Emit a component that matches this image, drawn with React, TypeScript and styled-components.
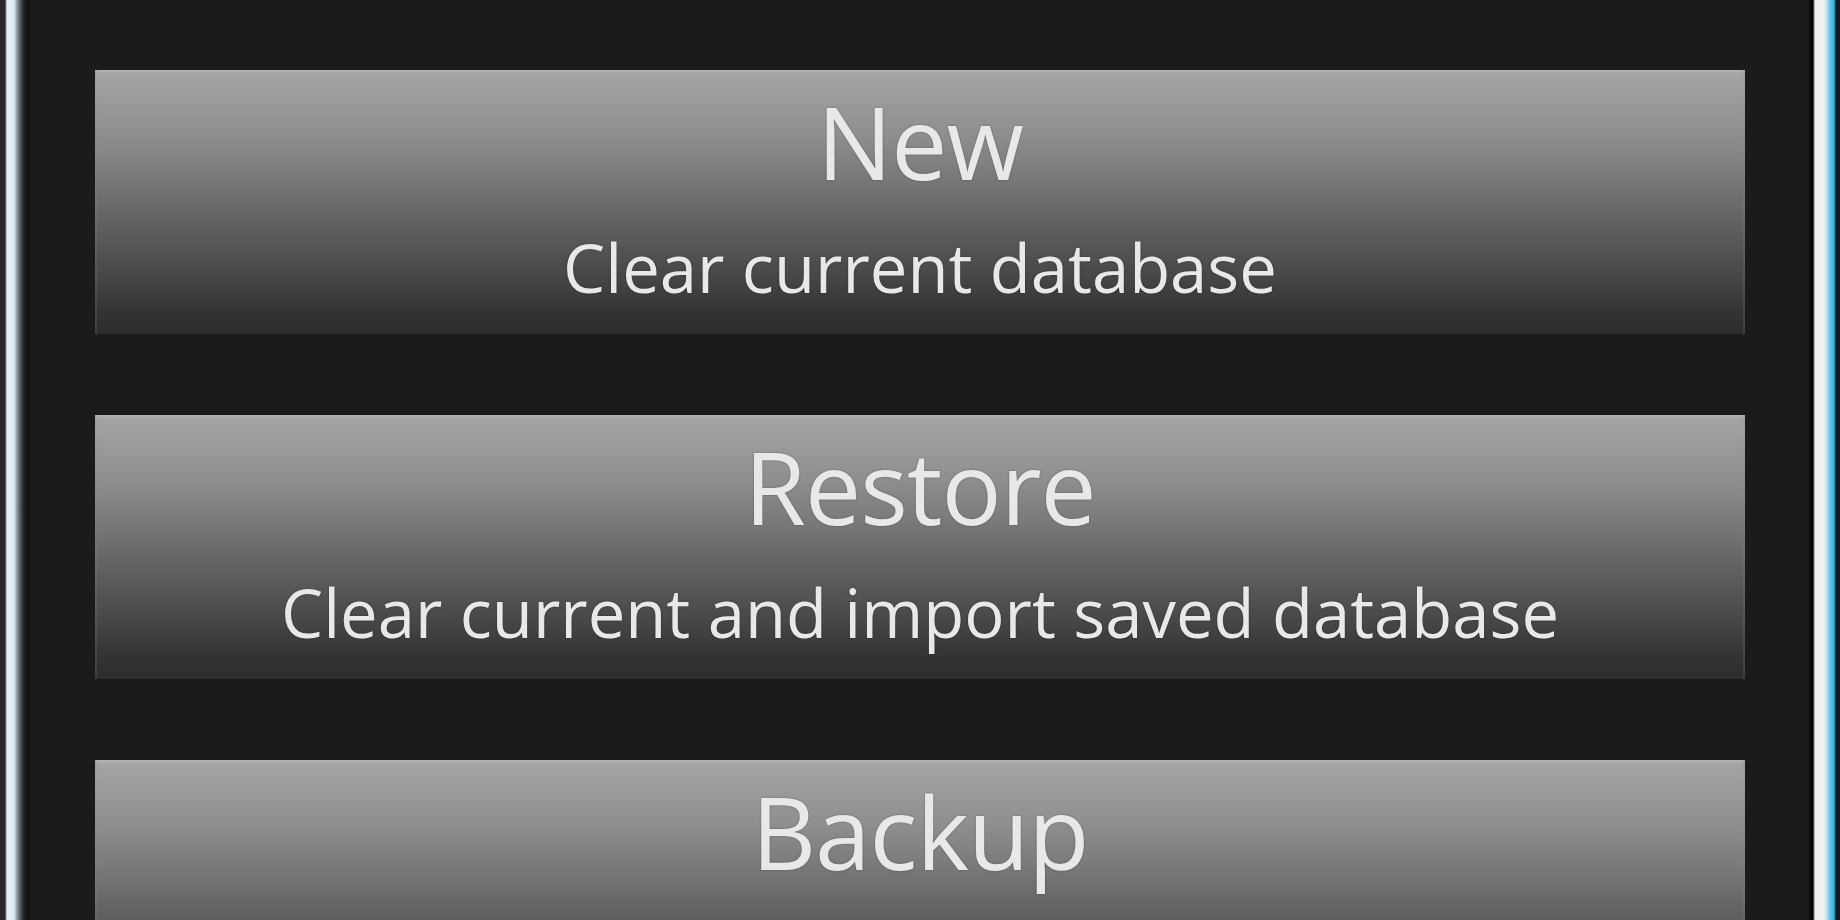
import React from 'react'
import styled, { createGlobalStyle } from 'styled-components'

type Action = {
    title: string,
    desc?: string,
}

// the third button runs past the bottom of the window; its caption is not visible
const actions: Action[] = [
    { title: 'New', desc: 'Clear current database' },
    { title: 'Restore', desc: 'Clear current and import saved database' },
    { title: 'Backup' },
]

const GlobalStyle = createGlobalStyle`
html, body {
    margin: 0;
    padding: 0;
    background: #1b1b1b;
    overflow: hidden;
}
`

const Page = styled.div`
display: flex;
height: 100vh;
width: 100vw;
overflow: hidden;
font-family: "Open Sans", "Noto Sans", sans-serif;
`

const Edge = styled.div<{ $side: 'left' | 'right' }>`
flex: 0 0 32px;
background: ${p => p.$side === 'left'
    ? 'linear-gradient(to right, #2e2628 0px, #2e2628 5px, #e4f0fa 7px, #dceaf6 14px, #7c8289 18px, #2a2a2a 23px, #131313 27px, #1b1b1b 32px)'
    : 'linear-gradient(to right, #1b1b1b 0px, #0c0c0c 2px, #050505 5px, #f2f2f6 7px, #eeeef3 16px, #a8e2f4 19px, #58c8ec 22px, #3ab2da 26px, #10161a 28px, #1a1a1a 32px)'};
`

const Panel = styled.div`
flex: 1;
display: flex;
flex-direction: column;
gap: 81px;
padding: 70px 63px 0;
background: #1b1b1b;
`

const ActionButton = styled.button`
flex: 0 0 264px;
display: flex;
flex-direction: column;
align-items: center;
padding: 0;
border: none;
border-left: 2px solid #8e8e8e33;
border-right: 2px solid #8e8e8e33;
background: linear-gradient(to bottom, #b4b4b4 0px, #a4a4a4 4px, #8e8e8e 25%, #6c6c6c 50%, #4b4b4b 75%, #333333 92%, #2d2d2d 100%);
color: #e8e8e8;
font-family: inherit;
cursor: pointer;
text-shadow: 0 0 2px rgba(0, 0, 0, 0.35);
`

const Title = styled.span`
margin-top: 3px;
font-size: 100px;
line-height: 136px;
letter-spacing: -1px;
`

const Desc = styled.span`
margin-top: 13px;
font-size: 67px;
line-height: 90px;
`

export default function App() {
    return (
        <>
            <GlobalStyle />
            <Page>
                <Edge $side="left" />
                <Panel>
                    {actions.map(a => (
                        <ActionButton key={a.title} type="button">
                            <Title>{a.title}</Title>
                            {a.desc && <Desc>{a.desc}</Desc>}
                        </ActionButton>
                    ))}
                </Panel>
                <Edge $side="right" />
            </Page>
        </>
    )
}
